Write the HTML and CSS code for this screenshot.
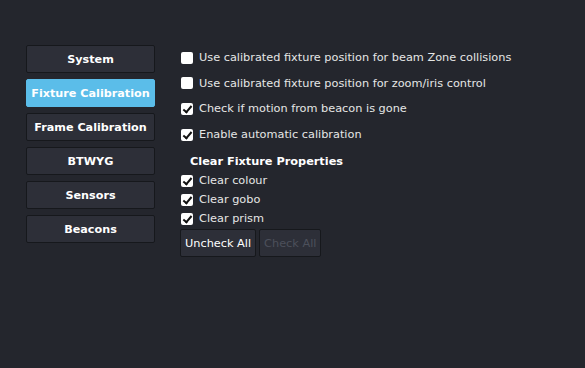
FILE: index.html
```html
<html><head>
<title>Calibration</title>
<link rel="stylesheet" href="styles.css">
</head>
<body>
<div class="page">
<div class="nav">
<button class="tab">System</button>
<button class="tab active">Fixture Calibration</button>
<button class="tab">Frame Calibration</button>
<button class="tab">BTWYG</button>
<button class="tab">Sensors</button>
<button class="tab">Beacons</button>
</div>
<div class="panel">
<label class="opt"><input type="checkbox"> Use calibrated fixture position for beam Zone collisions</label>
<label class="opt"><input type="checkbox"> Use calibrated fixture position for zoom/iris control</label>
<label class="opt"><input type="checkbox" checked> Check if motion from beacon is gone</label>
<label class="opt"><input type="checkbox" checked> Enable automatic calibration</label>
<h3>Clear Fixture Properties</h3>
<label class="sub"><input type="checkbox" checked> Clear colour</label>
<label class="sub"><input type="checkbox" checked> Clear gobo</label>
<label class="sub"><input type="checkbox" checked> Clear prism</label>
<div class="actions">
<button class="btn">Uncheck All</button>
<button class="btn" disabled>Check All</button>
</div>
</div>
</div>
</body>
</html>
```
FILE: styles.css
```css
body { margin: 0; background: #24262d; color: #e6e6e6; font-family: "DejaVu Sans", sans-serif; font-size: 11.3px; }
.page { display: flex; padding: 45px 0 0 26px; gap: 26px; }
.nav { display: flex; flex-direction: column; gap: 6px; width: 129px; }
.tab { height: 28px; background: #2d2f38; border: 1px solid #16181c; border-radius: 2px; color: #fff; font-family: "DejaVu Sans", sans-serif; font-weight: bold; font-size: 11.2px; padding: 0; }
.tab.active { background: #5bbde9; border-color: #5bbde9; }
.panel { display: flex; flex-direction: column; }
.opt { display: flex; align-items: center; height: 25.6px; }
.sub { display: flex; align-items: center; height: 19px; }
input[type=checkbox] { appearance: none; position: relative; width: 12px; height: 12px; margin: 0 6px 0 0; background: #fff; border-radius: 2px; }
input[type=checkbox]:checked::after { content: ""; position: absolute; left: 4px; top: 1px; width: 3px; height: 7px; border: solid #111; border-width: 0 2px 2px 0; transform: rotate(40deg); }
h3 { margin: 8px 0 3px 9px; font-size: 11.3px; font-weight: bold; color: #fff; }
.actions { display: flex; gap: 3px; margin: 1px 0 0 -1px; }
.btn { height: 28px; background: #2d2f38; border: 1px solid #16181c; border-radius: 2px; color: #fff; font-family: "DejaVu Sans", sans-serif; font-size: 11.3px; padding: 0 4px; }
.btn:disabled { color: #4c505b; }
```
